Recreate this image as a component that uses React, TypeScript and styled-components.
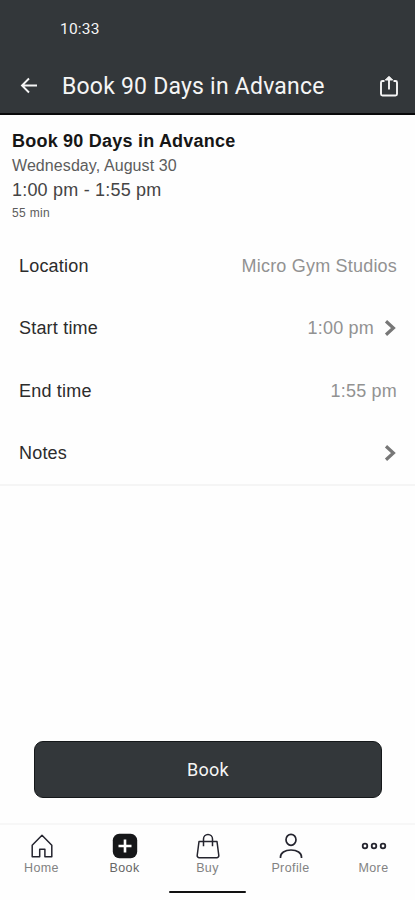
import React from "react";
import styled, { createGlobalStyle } from "styled-components";

const GlobalStyle = createGlobalStyle`
  * { box-sizing: border-box; }
  body { margin: 0; background: #fff; font-family: "Liberation Sans", Arial, sans-serif; }
`;

const Screen = styled.div`
  width: 415px;
  height: 900px;
  display: flex;
  flex-direction: column;
  background: #fefefe;
  overflow: hidden;
`;

const Header = styled.header`
  height: 115px;
  flex: none;
  background: #33373a;
  border-bottom: 2px solid #08090a;
  color: #f5f5f5;
  font-family: Roboto, sans-serif;
`;

const StatusBar = styled.div`
  height: 57px;
  padding: 0 0 0 60px;
  display: flex;
  align-items: center;
  font-size: 15.5px;
  letter-spacing: 0.2px;
`;

const TitleBar = styled.div`
  height: 56px;
  padding: 1px 15px 0 19px;
  display: flex;
  align-items: center;
`;

const HeaderTitle = styled.h1`
  flex: 1;
  margin: 2px 0 0 22px;
  font-size: 23px;
  font-weight: 400;
  line-height: 30px;
  letter-spacing: 0.21px;
  white-space: nowrap;
`;

const Summary = styled.section`
  height: 120px;
  flex: none;
  padding: 13px 12px 0;
`;

const ClassName = styled.h2`
  margin: 0;
  font-size: 18px;
  line-height: 26px;
  letter-spacing: 0.22px;
  color: #161616;
`;

const SummaryLine = styled.div<{ $size: number; $height: number; $color: string; $spacing?: number }>`
  font-size: ${(p) => p.$size}px;
  line-height: ${(p) => p.$height}px;
  color: ${(p) => p.$color};
  letter-spacing: ${(p) => p.$spacing ?? 0}px;
`;

const Details = styled.section`
  height: 251px;
  flex: none;
  border-bottom: 2px solid #f5f5f5;
`;

const Row = styled.div`
  height: 62.3px;
  padding: 1px 18px 0 19px;
  display: flex;
  align-items: center;
  justify-content: space-between;
  font-size: 18px;
  letter-spacing: 0.2px;
`;

const RowLabel = styled.span`
  color: #2c2c2c;
`;

const RowValue = styled.span`
  display: flex;
  align-items: center;
  gap: 10px;
  color: #929292;
`;

const Action = styled.div`
  flex: 1;
  padding: 0 33px 25px 34px;
  display: flex;
  align-items: flex-end;
`;

const BookButton = styled.button`
  width: 100%;
  height: 57px;
  padding: 0 0 1px;
  border: 1.5px solid #15181a;
  border-radius: 9px;
  background: #33373a;
  color: #f5f5f5;
  font: 400 18px Roboto, sans-serif;
  letter-spacing: 0.3px;
`;

const TabBar = styled.nav`
  height: 68px;
  flex: none;
  display: grid;
  grid-template-columns: repeat(5, 1fr);
  border-top: 2px solid #f7f7f7;
`;

const Tab = styled.a<{ $active?: boolean }>`
  padding-top: 7px;
  display: flex;
  flex-direction: column;
  align-items: center;
  gap: 1px;
  font-size: 12.5px;
  line-height: 15px;
  letter-spacing: 0.4px;
  color: ${(p) => (p.$active ? "#666" : "#828282")};
`;

const HomeIndicator = styled.div`
  width: 77px;
  height: 2px;
  flex: none;
  margin: 0 auto 7px;
  border-radius: 1px;
  background: #111;
`;

const BackIcon = () => (
  <svg width="21" height="21" viewBox="0 0 21 21" fill="none" stroke="#f5f5f5" strokeWidth="1.9">
    <path d="M18 10.5H3.5M10 3.5l-7 7 7 7" />
  </svg>
);

const ShareIcon = () => (
  <svg width="22" height="26" viewBox="0 0 22 26" fill="none" stroke="#f5f5f5" strokeWidth="1.9">
    <path d="M6.5 8H4.5A1.5 1.5 0 0 0 3 9.5V21a1.5 1.5 0 0 0 1.5 1.5h13A1.5 1.5 0 0 0 19 21V9.5A1.5 1.5 0 0 0 17.5 8h-2M11 16.5V4" />
    <path d="M7.3 7L11 3.3 14.7 7z" fill="#f5f5f5" strokeWidth="1" />
  </svg>
);

const Chevron = () => (
  <svg width="13" height="18" viewBox="0 0 13 18" fill="none" stroke="#777" strokeWidth="3.2">
    <path d="M2 1.2l7.4 6.8L2 14.8" />
  </svg>
);

const HomeIcon = () => (
  <svg width="28" height="28" viewBox="0 0 28 28" fill="none" stroke="#24242e" strokeWidth="1.5" strokeLinejoin="round">
    <path d="M4.2 13.2L14 3.3l9.8 9.9v11.6h-6.9v-7.6h-5.2v7.6H4.2z" />
  </svg>
);

const AddIcon = () => (
  <svg width="28" height="28" viewBox="0 0 28 28">
    <rect x="1.8" y="1.8" width="24.4" height="24.4" rx="6.5" fill="#161719" />
    <path d="M14 7.5v13M7.5 14h13" stroke="#fff" strokeWidth="2.6" />
  </svg>
);

const BagIcon = () => (
  <svg width="28" height="28" viewBox="0 0 28 28" fill="none" stroke="#24242e" strokeWidth="1.5" strokeLinejoin="round">
    <path d="M5 9.5h18l1.8 14a2 2 0 0 1-2 2.2H5.2a2 2 0 0 1-2-2.2z M9.5 14.2V7a4.5 4.5 0 0 1 9 0v7.2" />
  </svg>
);

const ProfileIcon = () => (
  <svg width="28" height="28" viewBox="0 0 28 28" fill="none" stroke="#24242e" strokeWidth="1.7">
    <ellipse cx="14" cy="7.8" rx="5" ry="5.5" />
    <path d="M3.5 26v-1c0-4 4.2-7 10.5-7s10.5 3 10.5 7v1" />
  </svg>
);

const MoreIcon = () => (
  <svg width="28" height="28" viewBox="0 0 28 28" fill="none" stroke="#24242e" strokeWidth="1.8">
    <circle cx="5" cy="14" r="2.3" />
    <circle cx="14" cy="14" r="2.3" />
    <circle cx="23" cy="14" r="2.3" />
  </svg>
);

const rows = [
  { label: "Location", value: "Micro Gym Studios", link: false },
  { label: "Start time", value: "1:00 pm", link: true },
  { label: "End time", value: "1:55 pm", link: false },
  { label: "Notes", value: "", link: true },
];

const tabs = [
  { label: "Home", Icon: HomeIcon },
  { label: "Book", Icon: AddIcon },
  { label: "Buy", Icon: BagIcon },
  { label: "Profile", Icon: ProfileIcon },
  { label: "More", Icon: MoreIcon },
];

export default function App() {
  return (
    <>
      <GlobalStyle />
      <Screen>
        <Header>
          <StatusBar>10:33</StatusBar>
          <TitleBar>
            <BackIcon />
            <HeaderTitle>Book 90 Days in Advance</HeaderTitle>
            <ShareIcon />
          </TitleBar>
        </Header>
        <Summary>
          <ClassName>Book 90 Days in Advance</ClassName>
          <SummaryLine $size={16} $height={24} $color="#5c5c5c" $spacing={0.08}>Wednesday, August 30</SummaryLine>
          <SummaryLine $size={18} $height={25} $color="#444" $spacing={0.2}>1:00 pm - 1:55 pm</SummaryLine>
          <SummaryLine $size={12} $height={21} $color="#5c5c5c" $spacing={0.35}>55 min</SummaryLine>
        </Summary>
        <Details>
          {rows.map((row) => (
            <Row key={row.label}>
              <RowLabel>{row.label}</RowLabel>
              <RowValue>
                {row.value}
                {row.link && <Chevron />}
              </RowValue>
            </Row>
          ))}
        </Details>
        <Action>
          <BookButton>Book</BookButton>
        </Action>
        <TabBar>
          {tabs.map(({ label, Icon }) => (
            <Tab key={label} $active={label === "Book"}>
              <Icon />
              {label}
            </Tab>
          ))}
        </TabBar>
        <HomeIndicator />
      </Screen>
    </>
  );
}
